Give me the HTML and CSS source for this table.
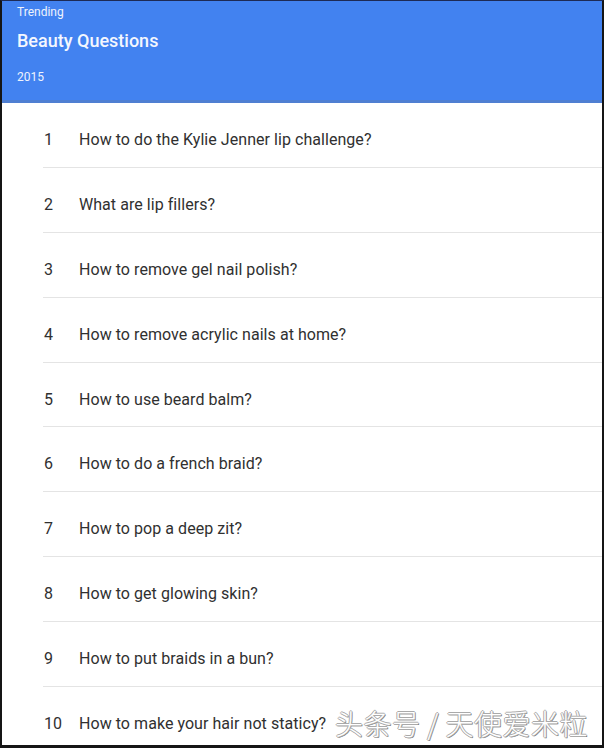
FILE: index.html
```html
<!DOCTYPE html>
<html>
<head>
<meta charset="utf-8">
<link rel="stylesheet" href="styles.css">
</head>
<body>
<div class="frame">
  <header class="hero">
    <div class="eyebrow">Trending</div>
    <h1 class="title">Beauty Questions</h1>
    <div class="year">2015</div>
  </header>
  <ol class="list">
    <li class="row"><span class="num">1</span><span class="q">How to do the Kylie Jenner lip challenge?</span></li>
    <li class="row"><span class="num">2</span><span class="q">What are lip fillers?</span></li>
    <li class="row"><span class="num">3</span><span class="q">How to remove gel nail polish?</span></li>
    <li class="row"><span class="num">4</span><span class="q">How to remove acrylic nails at home?</span></li>
    <li class="row"><span class="num">5</span><span class="q">How to use beard balm?</span></li>
    <li class="row"><span class="num">6</span><span class="q">How to do a french braid?</span></li>
    <li class="row"><span class="num">7</span><span class="q">How to pop a deep zit?</span></li>
    <li class="row"><span class="num">8</span><span class="q">How to get glowing skin?</span></li>
    <li class="row"><span class="num">9</span><span class="q">How to put braids in a bun?</span></li>
    <li class="row last"><span class="num">10</span><span class="q">How to make your hair not staticy?</span></li>
  </ol>
  <div class="watermark">头条号 / 天使爱米粒</div>
</div>
</body>
</html>
```
FILE: styles.css
```css
html, body {
  margin: 0;
  padding: 0;
  background: #fff;
}
.frame {
  position: relative;
  box-sizing: border-box;
  width: 604px;
  height: 748px;
  overflow: hidden;
  border-top: 1px solid #1d2a55;
  border-left: 2px solid #151515;
  border-right: 2px solid #151515;
  border-bottom: 3px solid #151515;
  font-family: Roboto, "Noto Sans", sans-serif;
  background: #fff;
}
.hero {
  box-sizing: border-box;
  height: 102px;
  background: #4282f0;
  color: #eef3fd;
  padding: 3px 0 0 15px;
  border-bottom: 3px solid #4f7fd2;
}
.eyebrow {
  font-size: 12px;
  line-height: 16px;
}
.title {
  margin: 10px 0 0 0;
  font-size: 18px;
  font-weight: 500;
  line-height: 22px;
  color: #f4f7fe;
}
.year {
  margin-top: 17px;
  font-size: 12px;
  line-height: 16px;
}
.list {
  list-style: none;
  margin: 0;
  padding: 0 0 0 41px;
}
.row {
  display: flex;
  align-items: center;
  box-sizing: border-box;
  height: 64.9px;
  padding-top: 9px;
  border-bottom: 1px solid #e4e4e4;
  font-size: 16px;
  color: #303030;
}
.row.last {
  border-bottom: none;
}
.num {
  width: 35px;
  padding-left: 1px;
}
.q {
  letter-spacing: 0.05px;
}
.watermark {
  position: absolute;
  left: 333px;
  top: 704px;
  font-family: "Noto Sans CJK SC", sans-serif;
  font-size: 28px;
  font-weight: 300;
  line-height: 36px;
  color: #fff;
  letter-spacing: 0.5px;
  text-shadow: -1px 0 #aaa, 1px 0 #aaa, 0 1px #aaa, 0 -1px #aaa, 1px 1px #777;
}
```
